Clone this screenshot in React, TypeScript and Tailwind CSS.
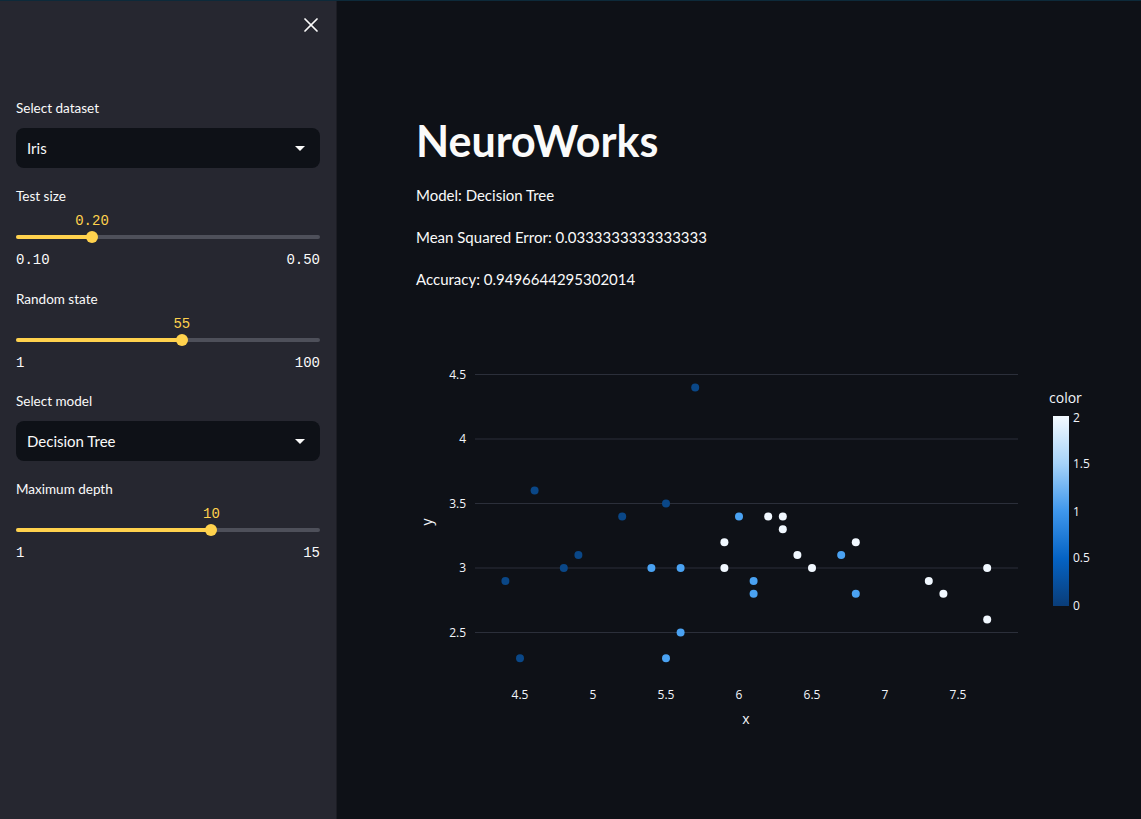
import { X } from "lucide-react";

const OX = 416;
const OY = 310;
const px = (v: number) => 520 + (v - 4.5) * 146 - OX;
const py = (v: number) => 568 - (v - 3) * 129 - OY;

const classColor = ["#0a4787", "#4aa2f2", "#f1f8ff"];

const points: [number, number, number][] = [
  [4.4, 2.9, 0], [4.5, 2.3, 0], [4.6, 3.6, 0], [4.8, 3.0, 0], [4.9, 3.1, 0],
  [5.2, 3.4, 0], [5.5, 3.5, 0], [5.7, 4.4, 0],
  [5.4, 3.0, 1], [5.5, 2.3, 1], [5.6, 3.0, 1], [5.6, 2.5, 1], [6.0, 3.4, 1],
  [6.1, 2.9, 1], [6.1, 2.8, 1], [6.7, 3.1, 1], [6.8, 2.8, 1],
  [5.9, 3.2, 2], [5.9, 3.0, 2], [6.2, 3.4, 2], [6.3, 3.4, 2], [6.3, 3.3, 2],
  [6.4, 3.1, 2], [6.5, 3.0, 2], [6.8, 3.2, 2], [7.3, 2.9, 2], [7.4, 2.8, 2],
  [7.7, 3.0, 2], [7.7, 2.6, 2],
];

const yTicks = [4.5, 4, 3.5, 3, 2.5];
const xTicks = [4.5, 5, 5.5, 6, 6.5, 7, 7.5];
const barTicks = [
  { label: "2", y: 418 },
  { label: "1.5", y: 464 },
  { label: "1", y: 512 },
  { label: "0.5", y: 558 },
  { label: "0", y: 606 },
];

function SelectBox({ label, value }: { label: string; value: string }) {
  return (
    <div>
      <p className="h-5 text-[13.5px] leading-5 text-[#fafafa]">{label}</p>
      <div className="mt-[10px] flex h-10 items-center justify-between rounded-lg bg-[#0e1117] pl-[11px] pr-[15px]">
        <span className="text-[15px] text-[#fafafa]">{value}</span>
        <span className="h-0 w-0 border-x-[5px] border-t-[5px] border-x-transparent border-t-[#fafafa]" />
      </div>
    </div>
  );
}

function Slider({
  label,
  value,
  min,
  max,
  pct,
}: {
  label: string;
  value: string;
  min: string;
  max: string;
  pct: number;
}) {
  return (
    <div>
      <p className="h-5 text-[13.5px] leading-5 text-[#fafafa]">{label}</p>
      <div className="relative mt-[5px] h-5 font-['Liberation_Mono',monospace] text-sm leading-5 text-[#ffd24d]">
        <span className="absolute -translate-x-1/2" style={{ left: `${pct}%` }}>
          {value}
        </span>
      </div>
      <div className="relative h-3">
        <div className="absolute inset-x-0 top-[4px] h-1 rounded-full bg-[#4e505a]" />
        <div className="absolute left-0 top-[4px] h-1 rounded-full bg-[#ffd24d]" style={{ width: `${pct}%` }} />
        <div
          className="absolute top-0 h-3 w-3 -translate-x-1/2 rounded-full bg-[#ffd24d]"
          style={{ left: `${pct}%` }}
        />
      </div>
      <div className="mt-[7px] flex h-5 justify-between font-['Liberation_Mono',monospace] text-sm leading-5 text-[#fafafa]">
        <span>{min}</span>
        <span>{max}</span>
      </div>
    </div>
  );
}

function ScatterChart() {
  const gridLeft = 475 - OX;
  const gridRight = 1018 - OX;
  return (
    <svg width={725} height={430} className="block font-['Open_Sans',sans-serif]">
      <defs>
        <linearGradient id="blues" x1="0" y1="1" x2="0" y2="0">
          <stop offset="0" stopColor="#0a3d78" />
          <stop offset="0.25" stopColor="#0563c4" />
          <stop offset="0.5" stopColor="#3f97ec" />
          <stop offset="0.75" stopColor="#a6d3f9" />
          <stop offset="1" stopColor="#f3faff" />
        </linearGradient>
      </defs>
      {yTicks.map((t) => (
        <g key={t}>
          <line x1={gridLeft} x2={gridRight} y1={py(t)} y2={py(t)} stroke="#2b2f3a" strokeWidth={1} />
          <text x={466 - OX} y={py(t)} dy="0.35em" textAnchor="end" fontSize={12} fill="#f2f5fa">
            {t}
          </text>
        </g>
      ))}
      {xTicks.map((t) => (
        <text key={t} x={px(t)} y={695 - OY} dy="0.35em" textAnchor="middle" fontSize={12} fill="#f2f5fa">
          {t}
        </text>
      ))}
      <text x={746 - OX} y={719 - OY} dy="0.35em" textAnchor="middle" fontSize={14} fill="#f2f5fa">
        x
      </text>
      <text
        x={427 - OX}
        y={522 - OY}
        dy="0.35em"
        textAnchor="middle"
        fontSize={14}
        fill="#f2f5fa"
        transform={`rotate(-90 ${427 - OX} ${522 - OY})`}
      >
        y
      </text>
      {points.map(([x, y, c], i) => (
        <circle key={i} cx={px(x)} cy={py(y)} r={4} fill={classColor[c]} />
      ))}
      <text x={1049 - OX} y={398 - OY} dy="0.35em" fontSize={14} fill="#f2f5fa">
        color
      </text>
      <rect x={1053 - OX} y={416 - OY} width={16} height={190} fill="url(#blues)" />
      {barTicks.map((b) => (
        <text key={b.label} x={1073 - OX} y={b.y - OY} dy="0.35em" fontSize={12} fill="#f2f5fa">
          {b.label}
        </text>
      ))}
    </svg>
  );
}

export default function App() {
  return (
    <div className="flex h-screen flex-col overflow-hidden bg-[#0e1117] font-['Lato','Noto_Sans',sans-serif]">
      <div className="h-px w-full shrink-0 bg-[#0d2a3a]" />
      <div className="flex min-h-0 flex-1">
        <aside className="flex w-[337px] shrink-0 flex-col border-r border-[#1c1d24] bg-[#262730] px-4">
          <div className="flex h-[47px] items-center justify-end pr-px">
            <X className="-mr-1 h-6 w-6 text-[#fafafa]" strokeWidth={1.75} />
          </div>
          <div className="mt-[50px] flex flex-col">
            <SelectBox label="Select dataset" value="Iris" />
            <div className="mt-[18px]">
              <Slider label="Test size" value="0.20" min="0.10" max="0.50" pct={25} />
            </div>
            <div className="mt-[19px]">
              <Slider label="Random state" value="55" min="1" max="100" pct={(54 / 99) * 100} />
            </div>
            <div className="mt-[18px]">
              <SelectBox label="Select model" value="Decision Tree" />
            </div>
            <div className="mt-[18px]">
              <Slider label="Maximum depth" value="10" min="1" max="15" pct={(9 / 14) * 100} />
            </div>
          </div>
        </aside>
        <main className="flex-1 pl-[79px] pt-[113px] text-[#fafafa]">
          <h1 className="text-[43px] font-bold leading-[53px]">NeuroWorks</h1>
          <div className="mt-[15px] flex flex-col gap-4 text-[15px] leading-[26px]">
            <p>Model: Decision Tree</p>
            <p>Mean Squared Error: 0.0333333333333333</p>
            <p>Accuracy: 0.9496644295302014</p>
          </div>
          <div className="mt-[18px]">
            <ScatterChart />
          </div>
        </main>
      </div>
    </div>
  );
}
